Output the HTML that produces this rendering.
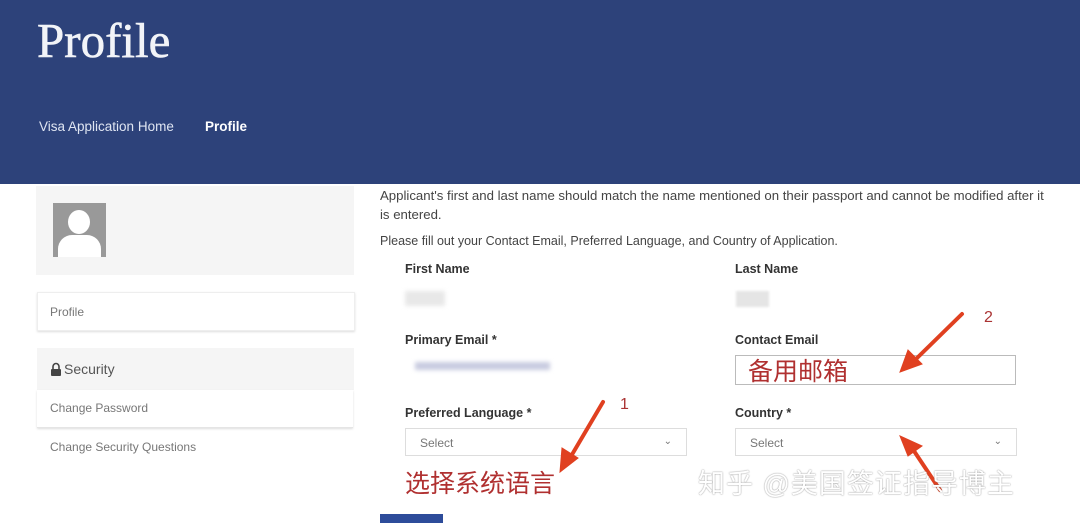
<!DOCTYPE html>
<html><head><meta charset="utf-8"><style>
body{margin:0;width:1080px;height:523px;overflow:hidden;background:#fff;font-family:"Liberation Sans","Noto Sans CJK SC",sans-serif;position:relative}
.a{position:absolute}
.hdr{left:0;top:0;width:1080px;height:184px;background:#2d427a}
.t{color:#333;font-size:12px}
.lbl{font-weight:bold;font-size:12.5px;color:#333}
.sel{border:1px solid #ddd;height:28px;box-sizing:border-box;font-size:12px;color:#777;padding:7px 14px}
.cn{color:#b03030;font-size:25px}
</style></head><body>
<div class="a hdr"></div>
<div class="a" style="left:37px;top:12px;font-family:'Liberation Serif',serif;font-size:49px;color:#f2f4f8;-webkit-text-stroke:0.6px #f2f4f8">Profile</div>
<div class="a" style="left:39px;top:119px;font-size:13.5px;color:#dfe5f2">Visa Application Home</div>
<div class="a" style="left:205px;top:119px;font-size:13.5px;color:#fff;font-weight:bold">Profile</div>

<div class="a" style="left:36px;top:186px;width:318px;height:89px;background:#f5f5f5"></div>
<div class="a" style="left:53px;top:203px;width:53px;height:54px;background:#999;overflow:hidden">
<div class="a" style="left:15px;top:7px;width:22px;height:24px;border-radius:50%;background:#fff"></div>
<div class="a" style="left:5px;top:32px;width:43px;height:30px;border-radius:14px 14px 0 0;background:#fff"></div></div>
<div class="a" style="left:37px;top:292px;width:316px;height:37px;border:1px solid #eee;box-shadow:0 1px 2px #ddd"></div>
<div class="a t" style="left:50px;top:305px;color:#777">Profile</div>
<div class="a" style="left:37px;top:348px;width:317px;height:42px;background:#f5f5f5"></div>
<svg class="a" style="left:50px;top:362px" width="12" height="14"><path d="M3 7V4.5a3 3 0 0 1 6 0V7" stroke="#444" stroke-width="1.6" fill="none"/><rect x="1" y="7" width="10" height="7" rx="1" fill="#444"/></svg>
<div class="a" style="left:64px;top:361px;font-size:14px;color:#555">Security</div>
<div class="a" style="left:37px;top:390px;width:316px;height:37px;border-bottom:1px solid #e5e5e5;box-shadow:0 1px 2px #ddd"></div>
<div class="a t" style="left:50px;top:401px;color:#777">Change Password</div>
<div class="a t" style="left:50px;top:440px;color:#777">Change Security Questions</div>

<div class="a t" style="left:380px;top:186px;line-height:19px;width:668px;font-size:13.2px;color:#444">Applicant's first and last name should match the name mentioned on their passport and cannot be modified after it is entered.</div>
<div class="a t" style="left:380px;top:234px;color:#444;font-size:12.5px">Please fill out your Contact Email, Preferred Language, and Country of Application.</div>
<div class="a lbl" style="left:405px;top:262px">First Name</div>
<div class="a lbl" style="left:735px;top:262px">Last Name</div>
<div class="a" style="left:405px;top:291px;width:40px;height:15px;background:#e8e8e8;filter:blur(2px)"></div>
<div class="a" style="left:736px;top:291px;width:33px;height:16px;background:#e5e5e5;filter:blur(1px)"></div>
<div class="a lbl" style="left:405px;top:333px">Primary Email *</div>
<div class="a lbl" style="left:735px;top:333px">Contact Email</div>
<div class="a" style="left:415px;top:362px;width:135px;height:8px;background:#c8cbe0;filter:blur(2px)"></div>
<div class="a" style="left:735px;top:355px;width:281px;height:30px;border:1px solid #bbb;box-sizing:border-box"></div>
<div class="a cn" style="left:748px;top:352px">备用邮箱</div>
<div class="a lbl" style="left:405px;top:406px">Preferred Language *</div>
<div class="a lbl" style="left:735px;top:406px">Country *</div>
<div class="a sel" style="left:405px;top:428px;width:282px">Select<span style="float:right;font-size:10px">&#8964;</span></div>
<div class="a sel" style="left:735px;top:428px;width:282px">Select<span style="float:right;font-size:10px">&#8964;</span></div>
<div class="a cn" style="left:405px;top:464px">选择系统语言</div>
<div class="a" style="left:380px;top:514px;width:63px;height:9px;background:#2d4c9a"></div>
<div class="a" style="left:620px;top:396px;font-size:16px;color:#a33">1</div>
<div class="a" style="left:984px;top:309px;font-size:16px;color:#a33">2</div>
<svg class="a" style="left:0;top:0" width="1080" height="523">
<g stroke="#e04020" stroke-width="4" fill="#e04020" stroke-linecap="round">
<line x1="603" y1="402" x2="570" y2="458"/><polygon points="560,472 562,448 578,458" stroke-width="1"/>
<line x1="962" y1="314" x2="915" y2="360"/><polygon points="900,372 908,350 922,364" stroke-width="1"/>
<line x1="940" y1="490" x2="912" y2="448"/><polygon points="900,436 922,446 908,456" stroke-width="1"/>
</g></svg>
<div class="a" style="left:698px;top:462px;font-size:27px;color:#fff;text-shadow:0 0 1.5px #777;letter-spacing:1px">知乎 @美国签证指导博主</div>
</body></html>
